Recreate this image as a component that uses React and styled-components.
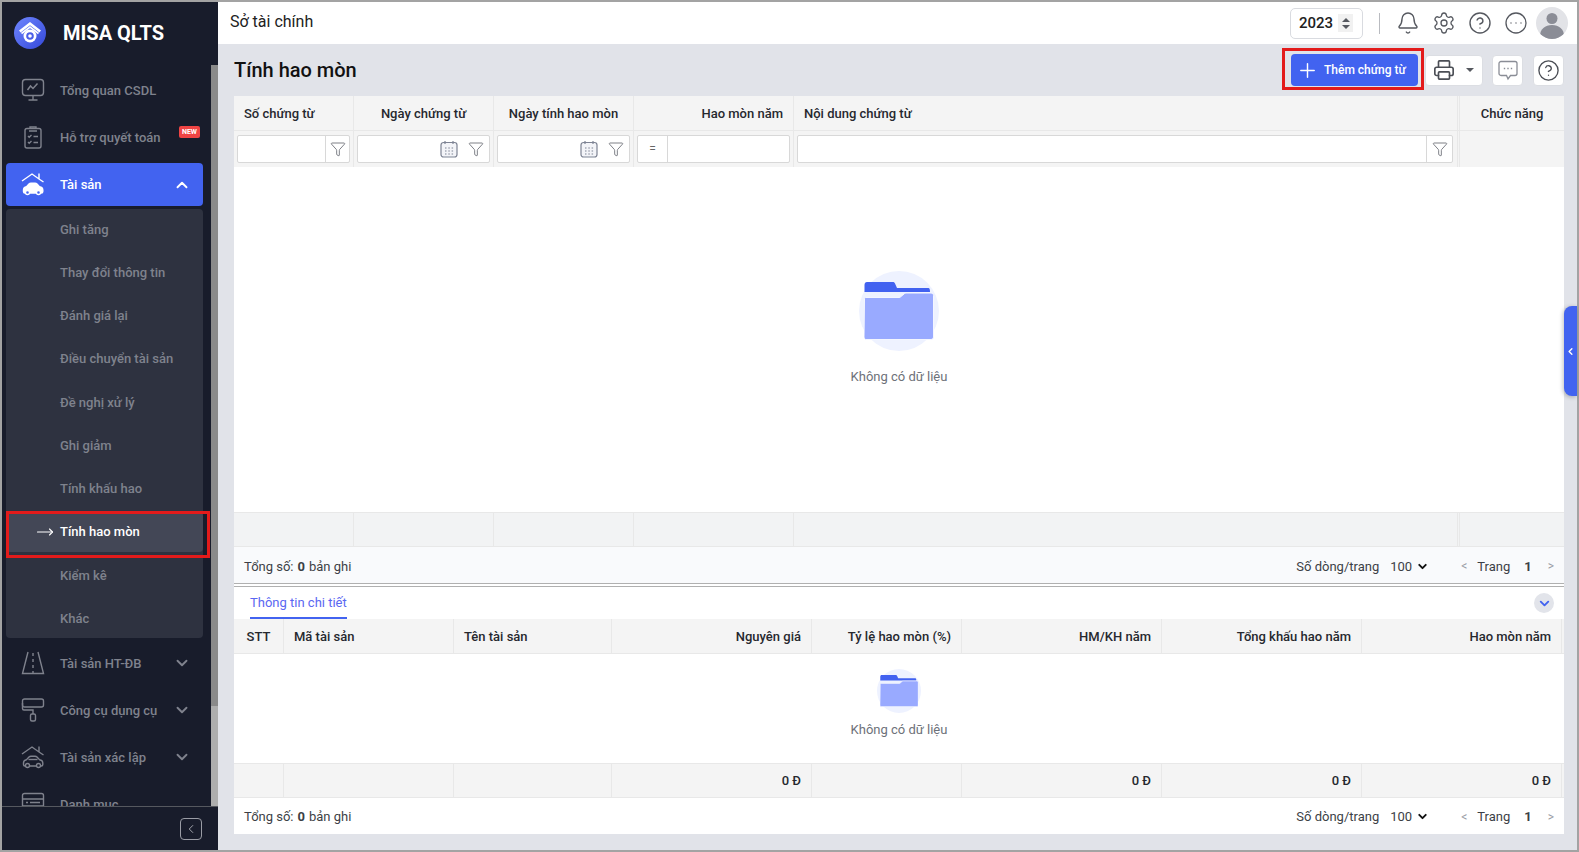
import React from "react";
import styled, { createGlobalStyle } from "styled-components";
import {
  Bell,
  ChevronDown,
  ChevronLeft,
  ChevronUp,
  CircleEllipsis,
  CircleHelp,
  Funnel,
  MoveRight,
  Plus,
  Printer,
  Settings,
} from "lucide-react";

const GlobalStyle = createGlobalStyle`
  html, body {
    margin: 0;
    padding: 0;
    overflow: hidden;
    font-family: Roboto, "Noto Sans", sans-serif;
  }
  * { box-sizing: border-box; }
`;

const Frame = styled.div`
  width: 1579px;
  height: 852px;
  padding: 2px;
  display: flex;
  background: #a3a3a3;
`;

/* ---------- sidebar ---------- */

const Sidebar = styled.aside`
  width: 216px;
  flex: none;
  display: flex;
  flex-direction: column;
  background: #181c2b;
`;

const Brand = styled.div`
  height: 63px;
  flex: none;
  display: flex;
  align-items: center;
  padding: 0 0 2px 11px;
  gap: 16px;
  color: #fff;
  font-size: 20px;
  font-weight: 700;
`;

const NavArea = styled.div`
  flex: 1;
  min-height: 0;
  display: flex;
  overflow: hidden;
`;

const NavList = styled.nav`
  flex: 1;
  min-width: 0;
  display: flex;
  flex-direction: column;
  gap: 3px;
  padding: 3px 8px 0 4px;
`;

const ScrollTrack = styled.div`
  width: 7px;
  flex: none;
  display: flex;
  flex-direction: column;
  background: #aeaeae;
`;

const ScrollThumb = styled.div`
  height: 641px;
  flex: none;
  background: #8a8a8a;
`;

const NavItem = styled.div`
  height: ${(p) => (p.$active ? 43 : 44)}px;
  margin-top: ${(p) => (p.$active ? 1 : 0)}px;
  flex: none;
  display: flex;
  align-items: center;
  position: relative;
  padding: 0 12px 0 54px;
  border-radius: 4px;
  font-size: 13px;
  font-weight: 500;
  color: ${(p) => (p.$active ? "#fff" : "#7f828d")};
  background: ${(p) => (p.$active ? "#4263f0" : "transparent")};
`;

const NavIcon = styled.span`
  position: absolute;
  left: 15px;
  top: ${(p) => (p.$active ? 9 : 10)}px;
  width: 24px;
  height: 24px;
  display: flex;
`;

const NavChevron = styled.span`
  margin-left: auto;
  display: flex;
`;

const NewBadge = styled.span`
  position: absolute;
  left: 173px;
  top: 11px;
  width: 21px;
  height: 12px;
  border-radius: 2px;
  background: #ef4444;
  color: #fff;
  font-size: 7px;
  font-weight: 700;
  line-height: 12px;
  text-align: center;
`;

const SubMenu = styled.div`
  flex: none;
  display: flex;
  flex-direction: column;
  gap: 3.25px;
  border-radius: 4px;
  background: #2e3240;
`;

const SubItem = styled.div`
  height: 40px;
  flex: none;
  display: flex;
  align-items: center;
  position: relative;
  padding-left: 54px;
  border-radius: 4px;
  font-size: 13px;
  font-weight: 500;
  color: ${(p) => (p.$active ? "#fff" : "#7f828d")};
  background: ${(p) => (p.$active ? "#434756" : "transparent")};
`;

const SubArrow = styled.span`
  position: absolute;
  left: 30px;
  top: 11px;
  display: flex;
`;

const SideFooter = styled.div`
  height: 44px;
  flex: none;
  display: flex;
  align-items: center;
  justify-content: flex-end;
  padding-right: 16px;
  border-top: 1px solid #55585f;
`;

const CollapseButton = styled.div`
  width: 22px;
  height: 22px;
  display: flex;
  align-items: center;
  justify-content: center;
  border: 1px solid #9a9ca5;
  border-radius: 4px;
  color: #b5b7be;
`;

const Highlight = styled.span`
  position: absolute;
  top: ${(p) => p.$top};
  bottom: ${(p) => p.$bottom};
  left: ${(p) => p.$left};
  right: ${(p) => p.$right};
  border: 3px solid #e31b1b;
  pointer-events: none;
`;

/* ---------- main area ---------- */

const Main = styled.main`
  flex: 1;
  min-width: 0;
  display: flex;
  flex-direction: column;
  position: relative;
  background: #e1e3e9;
`;

const TopBar = styled.header`
  height: 42px;
  flex: none;
  display: flex;
  align-items: center;
  justify-content: space-between;
  padding: 0 9px 0 12px;
  background: #fff;
  color: #212121;
  font-size: 16px;
`;

const OrgName = styled.span`
  margin-bottom: 3px;
`;

const TopActions = styled.div`
  display: flex;
  align-items: center;
  color: #55585f;
`;

const YearBox = styled.div`
  width: 73px;
  height: 31px;
  display: flex;
  align-items: center;
  justify-content: space-between;
  padding: 0 9px 0 8px;
  border: 1px solid #d9dbe0;
  border-radius: 5px;
  color: #212121;
  font-size: 15px;
  font-weight: 500;
`;

const YearSpin = styled.span`
  width: 15px;
  height: 18px;
  display: flex;
  flex-direction: column;
  align-items: center;
  justify-content: center;
  gap: 3px;
  background: #f1f1f1;
`;

const Caret = styled.i`
  width: 0;
  height: 0;
  border-left: ${(p) => p.$size || 4}px solid transparent;
  border-right: ${(p) => p.$size || 4}px solid transparent;
  ${(p) => (p.$up ? "border-bottom" : "border-top")}: ${(p) => p.$size || 4}px solid #55585f;
`;

const VDivider = styled.span`
  width: 1px;
  height: 21px;
  margin: 0 16px;
  background: #b9bbc0;
`;

const TopIcons = styled.div`
  display: flex;
  align-items: center;
  gap: 12px;
  margin-right: 8px;
`;

const Avatar = styled.div`
  width: 32px;
  height: 32px;
  border-radius: 50%;
  overflow: hidden;
  background: #e2e3e7;
`;

const PageHead = styled.div`
  height: 52px;
  flex: none;
  display: flex;
  align-items: center;
  justify-content: space-between;
  padding: 0 13px 0 16px;
`;

const PageTitle = styled.h1`
  margin: 0;
  color: #111;
  font-size: 20px;
  font-weight: 500;
`;

const HeadActions = styled.div`
  display: flex;
  align-items: center;
  gap: 10px;
`;

const PrimaryWrap = styled.div`
  position: relative;
  margin-right: -3px;
`;

const PrimaryButton = styled.button`
  width: 127px;
  height: 32px;
  display: flex;
  align-items: center;
  padding: 0 0 0 5px;
  gap: 5px;
  border: 0;
  border-radius: 4px;
  background: #4263f0;
  color: #fff;
  font-family: inherit;
  font-size: 12px;
  font-weight: 500;
`;

const IconButton = styled.div`
  width: ${(p) => p.$width || 31}px;
  height: 31px;
  margin-right: ${(p) => (p.$split ? -1 : 0)}px;
  display: flex;
  align-items: center;
  justify-content: ${(p) => (p.$split ? "space-between" : "center")};
  padding: ${(p) => (p.$split ? "0 8px 0 7px" : "0")};
  border: 1px solid #dcdee3;
  border-radius: 4px;
  background: #fff;
  color: #4b4e55;
`;

const Content = styled.div`
  flex: 1;
  min-height: 0;
  margin: 0 13px 16px 16px;
  display: flex;
  flex-direction: column;
  background: #fff;
`;

const Row = styled.div`
  height: ${(p) => p.$height}px;
  flex: none;
  display: grid;
  grid-template-columns: ${(p) => p.$cols};
  background: ${(p) => p.$bg || "#f4f4f4"};
  border-bottom: ${(p) => (p.$noLine ? "0" : "1px solid #e8e8e8")};
  border-top: ${(p) => (p.$topLine ? "1px solid #e8e8e8" : "0")};
`;

const Cell = styled.div`
  display: flex;
  align-items: center;
  justify-content: ${(p) =>
    p.$align === "right" ? "flex-end" : p.$align === "center" ? "center" : "flex-start"};
  padding: 0 10px;
  border-right: ${(p) => (p.$plain ? "0" : "1px solid #e8e8e8")};
  border-left: ${(p) => (p.$double ? "3px double #e8e8e8" : "0")};
  color: #26282e;
  font-size: 13px;
  font-weight: 500;
  white-space: nowrap;
`;

const FilterCell = styled.div`
  display: flex;
  padding: 4px ${(p) => (p.$plain ? 4 : 3)}px 3px 3px;
  border-right: ${(p) => (p.$plain ? "0" : "1px solid #e8e8e8")};
  border-left: ${(p) => (p.$double ? "3px double #e8e8e8" : "0")};
`;

const FilterBox = styled.div`
  flex: 1;
  height: 28px;
  display: flex;
  align-items: center;
  border: 1px solid #d8d8d8;
  border-radius: 2px;
  background: #fff;
  color: #5d6068;
`;

const BoxSpacer = styled.span`
  flex: 1;
`;

const BoxIcon = styled.span`
  width: ${(p) => p.$width || 24}px;
  height: 100%;
  flex: none;
  display: flex;
  align-items: center;
  justify-content: center;
  border-left: ${(p) => (p.$line ? "1px solid #d8d8d8" : "0")};
`;

const OpSign = styled.span`
  width: 30px;
  height: 100%;
  flex: none;
  display: flex;
  align-items: center;
  justify-content: center;
  border-right: 1px solid #d8d8d8;
  color: #666;
  font-size: 12px;
`;

const EmptyBody = styled.div`
  height: ${(p) => p.$height}px;
  flex: none;
  display: flex;
  flex-direction: column;
  align-items: center;
  justify-content: center;
  padding-bottom: ${(p) => p.$shift}px;
  color: #6d7179;
  font-size: 13px;
`;

const EmptyCircle = styled.div`
  width: ${(p) => p.$size}px;
  height: ${(p) => p.$size}px;
  margin-bottom: ${(p) => p.$gap}px;
  display: flex;
  align-items: center;
  justify-content: center;
  border-radius: 50%;
  background: #eef2ff;
`;

const Pager = styled.div`
  height: ${(p) => (p.$line ? 37 : 36)}px;
  flex: none;
  display: flex;
  align-items: center;
  justify-content: space-between;
  padding: ${(p) => (p.$line ? 2 : 1)}px 10px 0;
  background: ${(p) => p.$bg || "#fff"};
  border-bottom: ${(p) => (p.$line ? "1px solid #b0b0b0" : "0")};
  color: #3c3f46;
  font-size: 13px;
`;

const PagerSide = styled.div`
  display: flex;
  align-items: center;
`;

const PagerCount = styled.b`
  font-weight: 700;
  margin: 0 4px;
`;

const PageSize = styled.span`
  margin: 0 4px 0 11px;
`;

const PageStep = styled.span`
  color: #9a9da5;
  font-size: 12px;
  margin: ${(p) => p.$margin};
`;

const PageNum = styled.b`
  margin-left: 14px;
  font-weight: 700;
`;

const SplitLine = styled.div`
  height: 3px;
  flex: none;
  border-bottom: 1px solid #b0b0b0;
`;

const TabBar = styled.div`
  height: 32px;
  flex: none;
  display: flex;
  align-items: stretch;
  justify-content: space-between;
  padding: 0 10px 0 16px;
`;

const Tab = styled.div`
  display: flex;
  align-items: center;
  border-bottom: 2px solid #4263f0;
  color: #5a67f2;
  font-size: 13px;
`;

const ToggleRound = styled.div`
  width: 20px;
  height: 20px;
  margin-top: 6px;
  display: flex;
  align-items: center;
  justify-content: center;
  border-radius: 50%;
  background: #e2e4ea;
  color: #4263f0;
`;

const SideTab = styled.div`
  position: absolute;
  right: 0;
  top: 304px;
  width: 13px;
  height: 90px;
  display: flex;
  align-items: center;
  justify-content: center;
  border-radius: 8px 0 0 8px;
  background: #4263f0;
  box-shadow: -1px 1px 4px rgba(0, 0, 0, 0.25);
  color: #fff;
`;

/* ---------- drawings ---------- */

function Logo() {
  return (
    <svg width="34" height="34" viewBox="0 0 34 34">
      <defs>
        <linearGradient id="logoFill" x1="0" y1="0" x2="1" y2="1">
          <stop offset="0" stopColor="#6f86ff" />
          <stop offset="1" stopColor="#3448d8" />
        </linearGradient>
      </defs>
      <circle cx="17" cy="17" r="16" fill="url(#logoFill)" />
      <path d="M6 14.5 17 6l11 8.5-1.6 2L17 9.2 7.6 16.500Z" fill="#fff" />
      <path d="M8.500 17.500 17 11l8.500 6.500" fill="none" stroke="#fff" strokeWidth="1.6" />
      <circle cx="17" cy="20" r="6.500" fill="#fff" />
      <circle cx="17" cy="20" r="3.800" fill="#4a5ee8" />
      <circle cx="17" cy="20" r="1.800" fill="#fff" />
    </svg>
  );
}

function MonitorIcon() {
  return (
    <svg width="24" height="24" viewBox="0 0 24 24" fill="none" stroke="#7f828d" strokeWidth="1.4">
      <rect x="1.500" y="1.500" width="21" height="16" rx="3" />
      <path d="M6.500 12l3-4 2.500 2.500L16.500 5.500" strokeWidth="1.5" />
      <path d="M12 17.500V22M7.500 22h9" />
    </svg>
  );
}

function ClipboardIcon() {
  return (
    <svg width="24" height="24" viewBox="0 0 24 24" fill="none" stroke="#7f828d" strokeWidth="1.4">
      <rect x="4" y="3.500" width="16" height="19.500" rx="2" />
      <path d="M9 3.500V2h6v1.500M8 6h8" />
      <path d="M7 11l1.200 1.200L10.500 10M7 17l1.200 1.200L10.500 16M12.500 11.500H17M12.500 17.500H17" />
    </svg>
  );
}

function CarHouseIcon({ filled }) {
  const c = filled ? "#fff" : "#7f828d";
  return (
    <svg width="24" height="24" viewBox="0 0 24 24" fill="none" stroke={c} strokeWidth="1.4">
      <path d="M1 9 11 2l7 5V1.500M18 7l4.500 3" />
      <path d="M2.500 18c0-2 1-3 3-3.300l2.500-2.700c.5-.5 1-.7 2-.7h4c1 0 1.500.2 2 .7l2.500 2.700c2 .3 3.300 1.300 3.300 3.300v1.500c0 .8-.5 1.500-1.500 1.500H4c-1 0-1.500-.7-1.500-1.500Z" fill={filled ? "#fff" : "none"} />
      <path d="M7.500 14.500h9" />
      <circle cx="6.500" cy="20.500" r="2" fill={filled ? "#4263f0" : "#181c2b"} />
      <circle cx="17.500" cy="20.500" r="2" fill={filled ? "#4263f0" : "#181c2b"} />
    </svg>
  );
}

function RoadIcon() {
  return (
    <svg width="24" height="24" viewBox="0 0 24 24" fill="none" stroke="#7f828d" strokeWidth="1.4">
      <path d="M7 1 1.500 22.500h21L17 1" />
      <path d="M12 2v3M12 8v3M12 14v3M12 20v2.500" />
    </svg>
  );
}

function RollerIcon() {
  return (
    <svg width="24" height="24" viewBox="0 0 24 24" fill="none" stroke="#7f828d" strokeWidth="1.4">
      <rect x="1.500" y="1" width="21" height="8" rx="2" />
      <path d="M1.500 5v5.500c0 1 .5 1.500 1.500 1.500h9v4" />
      <rect x="9.500" y="16" width="5" height="7" rx="1.500" />
    </svg>
  );
}

function ListBoxIcon() {
  return (
    <svg width="24" height="24" viewBox="0 0 24 24" fill="none" stroke="#7f828d" strokeWidth="1.4">
      <rect x="1.500" y="1.500" width="21" height="18" rx="2" />
      <path d="M1.500 7h21M1.500 14h21M5 10.500h2M9 10.500h10" />
    </svg>
  );
}

function CalendarIcon() {
  return (
    <svg width="18" height="18" viewBox="0 0 18 18" fill="none" stroke="#7d8393" strokeWidth="1.200">
      <rect x="1" y="2.500" width="16" height="14.500" rx="2.500" fill="#f3f4f8" />
      <path d="M5 1v3M13 1v3" />
      <path d="M5 8h1.500M8.300 8h1.500M11.600 8h1.500M5 11h1.500M8.300 11h1.500M11.600 11h1.500M5 14h1.500M8.300 14h1.500M11.600 14h1.500" strokeWidth="1.100" />
    </svg>
  );
}

function CommentIcon() {
  return (
    <svg width="22" height="22" viewBox="0 0 22 22" fill="none" stroke="#8a8d96" strokeWidth="1.300">
      <path d="M4 2.500h14a2 2 0 0 1 2 2v10a2 2 0 0 1-2 2h-4.500L11 20l-1.500-3.500H4a2 2 0 0 1-2-2v-10a2 2 0 0 1 2-2Z" />
      <path d="M6.800 9.500h1.400M10.300 9.500h1.400M13.800 9.500h1.400" strokeWidth="1.500" />
    </svg>
  );
}

function FolderIcon({ scale }) {
  return (
    <svg width={70 * scale} height={58 * scale} viewBox="0 0 70 58">
      <path d="M.5 3C.5 1 1.500 0 3 0h26c1 0 1.500.5 2 1.500L33 6h31.500c1 0 1.500 1.500 1.500 4H.5Z" fill="#4262f0" />
      <path d="M.5 17c0-1 .5-1.500 1.500-1.500h33c1 0 1.500-.5 2-1L40 12c.5-.5 1-1 2-1h25c1.500 0 2.500 1 2.500 2.500V55c0 1.500-1 2.500-2.500 2.500H2c-1 0-2-1-2-2.500Z" fill="#99aaff" stroke="#f4f6ff" strokeWidth="1" />
    </svg>
  );
}

function AvatarShape() {
  return (
    <svg width="32" height="32" viewBox="0 0 32 32" fill="#8b8d96">
      <circle cx="16" cy="11.500" r="5.500" />
      <path d="M4 29c0-7 5-11 12-11s12 4 12 11v3H4Z" />
    </svg>
  );
}

/* ---------- data ---------- */

const subItems = [
  "Ghi tăng",
  "Thay đổi thông tin",
  "Đánh giá lại",
  "Điều chuyển tài sản",
  "Đề nghị xử lý",
  "Ghi giảm",
  "Tính khấu hao",
  "Tính hao mòn",
  "Kiểm kê",
  "Khác",
];

const topCols = "120px 140px 140px 160px 663px 1fr";
const detailCols = "50px 170px 158px 200px 150px 200px 200px 200px";

const detailHead = [
  ["STT", "center"],
  ["Mã tài sản", "left"],
  ["Tên tài sản", "left"],
  ["Nguyên giá", "right"],
  ["Tỷ lệ hao mòn (%)", "right"],
  ["HM/KH năm", "right"],
  ["Tổng khấu hao năm", "right"],
  ["Hao mòn năm", "right"],
];

const sumCells = ["", "", "", "0 Đ", "", "0 Đ", "0 Đ", "0 Đ"];

function TablePager({ bg, line }) {
  return (
    <Pager $bg={bg} $line={line}>
      <PagerSide>
        Tổng số:<PagerCount>0</PagerCount>bản ghi
      </PagerSide>
      <PagerSide>
        Số dòng/trang
        <PageSize>100</PageSize>
        <ChevronDown size={13} strokeWidth={3.5} color="#111" />
        <PageStep $margin="0 10px 0 32px">&lt;</PageStep>
        Trang
        <PageNum>1</PageNum>
        <PageStep $margin="0 0 0 16px">&gt;</PageStep>
      </PagerSide>
    </Pager>
  );
}

export default function App() {
  return (
    <>
      <GlobalStyle />
      <Frame>
        <Sidebar>
          <Brand>
            <Logo />
            MISA QLTS
          </Brand>
          <NavArea>
            <NavList>
              <NavItem>
                <NavIcon><MonitorIcon /></NavIcon>
                Tổng quan CSDL
              </NavItem>
              <NavItem>
                <NavIcon><ClipboardIcon /></NavIcon>
                Hỗ trợ quyết toán
                <NewBadge>NEW</NewBadge>
              </NavItem>
              <NavItem $active>
                <NavIcon $active><CarHouseIcon filled /></NavIcon>
                Tài sản
                <NavChevron><ChevronUp size={18} strokeWidth={2.5} /></NavChevron>
              </NavItem>
              <SubMenu>
                {subItems.map((name) => {
                  const active = name === "Tính hao mòn";
                  return (
                    <SubItem key={name} $active={active}>
                      {active && (
                        <SubArrow><MoveRight size={18} strokeWidth={1.5} color="#fff" /></SubArrow>
                      )}
                      {name}
                      {active && <Highlight $top="-1px" $bottom="-6px" $left="0" $right="-7px" />}
                    </SubItem>
                  );
                })}
              </SubMenu>
              <NavItem>
                <NavIcon><RoadIcon /></NavIcon>
                Tài sản HT-ĐB
                <NavChevron><ChevronDown size={18} strokeWidth={2.5} /></NavChevron>
              </NavItem>
              <NavItem>
                <NavIcon><RollerIcon /></NavIcon>
                Công cụ dụng cụ
                <NavChevron><ChevronDown size={18} strokeWidth={2.5} /></NavChevron>
              </NavItem>
              <NavItem>
                <NavIcon><CarHouseIcon /></NavIcon>
                Tài sản xác lập
                <NavChevron><ChevronDown size={18} strokeWidth={2.5} /></NavChevron>
              </NavItem>
              <NavItem>
                <NavIcon><ListBoxIcon /></NavIcon>
                Danh mục
              </NavItem>
            </NavList>
            <ScrollTrack><ScrollThumb /></ScrollTrack>
          </NavArea>
          <SideFooter>
            <CollapseButton><ChevronLeft size={14} strokeWidth={1.5} /></CollapseButton>
          </SideFooter>
        </Sidebar>

        <Main>
          <TopBar>
            <OrgName>Sở tài chính</OrgName>
            <TopActions>
              <YearBox>
                2023
                <YearSpin><Caret $up /><Caret /></YearSpin>
              </YearBox>
              <VDivider />
              <TopIcons>
                <Bell size={24} strokeWidth={1.4} />
                <Settings size={24} strokeWidth={1.3} />
                <CircleHelp size={24} strokeWidth={1.4} />
                <CircleEllipsis size={24} strokeWidth={1.3} />
              </TopIcons>
              <Avatar><AvatarShape /></Avatar>
            </TopActions>
          </TopBar>

          <PageHead>
            <PageTitle>Tính hao mòn</PageTitle>
            <HeadActions>
              <PrimaryWrap>
                <PrimaryButton>
                  <Plus size={23} strokeWidth={1.5} />
                  Thêm chứng từ
                </PrimaryButton>
                <Highlight $top="-6px" $bottom="-4px" $left="-9px" $right="-6px" />
              </PrimaryWrap>
              <IconButton $width={58} $split>
                <Printer size={22} strokeWidth={1.8} />
                <Caret $size={4} />
              </IconButton>
              <IconButton><CommentIcon /></IconButton>
              <IconButton><CircleHelp size={23} strokeWidth={1.4} /></IconButton>
            </HeadActions>
          </PageHead>

          <Content>
            <Row $height={35} $cols={topCols}>
              <Cell>Số chứng từ</Cell>
              <Cell $align="center">Ngày chứng từ</Cell>
              <Cell $align="center">Ngày tính hao mòn</Cell>
              <Cell $align="right">Hao mòn năm</Cell>
              <Cell $plain>Nội dung chứng từ</Cell>
              <Cell $align="center" $plain $double>Chức năng</Cell>
            </Row>
            <Row $height={36} $cols={topCols} $noLine>
              <FilterCell>
                <FilterBox>
                  <BoxSpacer />
                  <BoxIcon $line><Funnel size={16} strokeWidth={1.2} /></BoxIcon>
                </FilterBox>
              </FilterCell>
              <FilterCell>
                <FilterBox>
                  <BoxSpacer />
                  <BoxIcon $width={28}><CalendarIcon /></BoxIcon>
                  <BoxIcon $width={26}><Funnel size={16} strokeWidth={1.2} /></BoxIcon>
                </FilterBox>
              </FilterCell>
              <FilterCell>
                <FilterBox>
                  <BoxSpacer />
                  <BoxIcon $width={28}><CalendarIcon /></BoxIcon>
                  <BoxIcon $width={26}><Funnel size={16} strokeWidth={1.2} /></BoxIcon>
                </FilterBox>
              </FilterCell>
              <FilterCell>
                <FilterBox>
                  <OpSign>=</OpSign>
                </FilterBox>
              </FilterCell>
              <FilterCell $plain>
                <FilterBox>
                  <BoxSpacer />
                  <BoxIcon $line $width={26}><Funnel size={16} strokeWidth={1.2} /></BoxIcon>
                </FilterBox>
              </FilterCell>
              <FilterCell $plain $double />
            </Row>
            <EmptyBody $height={345} $shift={25}>
              <EmptyCircle $size={80} $gap={18}><FolderIcon scale={1} /></EmptyCircle>
              Không có dữ liệu
            </EmptyBody>
            <Row $height={35} $cols={topCols} $bg="#f2f3f4" $topLine>
              <Cell />
              <Cell />
              <Cell />
              <Cell />
              <Cell $plain />
              <Cell $plain $double />
            </Row>
            <TablePager bg="#f9fafc" line />
            <SplitLine />
            <TabBar>
              <Tab>Thông tin chi tiết</Tab>
              <ToggleRound><ChevronDown size={15} strokeWidth={3} /></ToggleRound>
            </TabBar>
            <Row $height={35} $cols={detailCols}>
              {detailHead.map(([label, align]) => (
                <Cell key={label} $align={align}>{label}</Cell>
              ))}
            </Row>
            <EmptyBody $height={109} $shift={11}>
              <EmptyCircle $size={44} $gap={9}><FolderIcon scale={0.55} /></EmptyCircle>
              Không có dữ liệu
            </EmptyBody>
            <Row $height={35} $cols={detailCols} $topLine>
              {sumCells.map((v, i) => (
                <Cell key={i} $align="right">{v}</Cell>
              ))}
            </Row>
            <TablePager />
          </Content>
          <SideTab><ChevronLeft size={11} strokeWidth={3} /></SideTab>
        </Main>
      </Frame>
    </>
  );
}
